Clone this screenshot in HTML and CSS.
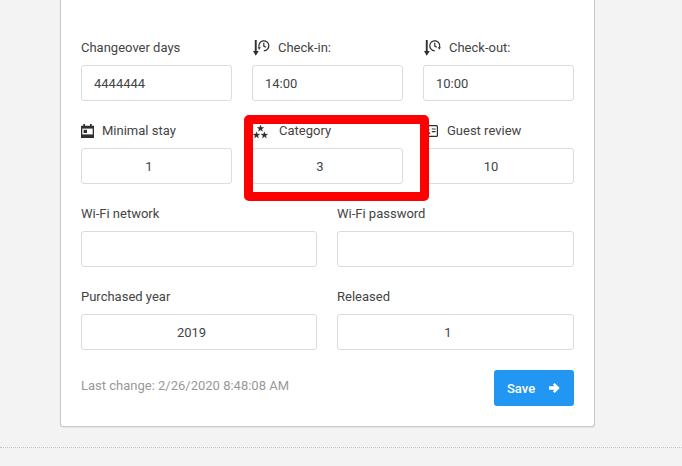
FILE: index.html
```html
<!DOCTYPE html>
<html lang="en">
<head>
<meta charset="utf-8">
<title>Property details</title>
<link rel="stylesheet" href="styles.css">
</head>
<body>
<main class="page">
  <form class="card">
    <div class="row">
      <label class="field">
        <span class="label">Changeover days</span>
        <input class="input" type="text" value="4444444">
      </label>
      <label class="field">
        <span class="label">
          <svg class="icon icon-time" viewBox="0 0 16 16" aria-hidden="true">
            <path class="solid" d="M1.800 0h1.900v11h2.100L2.750 15.800 0 11h1.800z"/>
            <path class="line" d="M10.800 10.800A5 5 0 1 0 6.100 7.400"/>
            <path class="solid" d="M4.600 7.300h3.200l-1.600 2.500z"/>
            <path class="line" d="M10.800 2.800v3.300l2 1.100"/>
          </svg>
          Check-in:
        </span>
        <input class="input" type="text" value="14:00">
      </label>
      <label class="field">
        <span class="label">
          <svg class="icon icon-time" viewBox="0 0 16 16" aria-hidden="true">
            <path class="solid" d="M1.800 0h1.900v11h2.100L2.750 15.800 0 11h1.800z"/>
            <path class="line" d="M10.800 10.800A5 5 0 1 1 15.500 7.400"/>
            <path class="solid" d="M13.700 7.300h3.200l-1.600 2.500z"/>
            <path class="line" d="M10.800 2.800v3.300l2 1.100"/>
          </svg>
          Check-out:
        </span>
        <input class="input" type="text" value="10:00">
      </label>
    </div>
    <div class="row">
      <label class="field">
        <span class="label">
          <svg class="icon icon-calendar" viewBox="0 0 13 14" aria-hidden="true">
            <path class="solid" d="M2.300 0h1.700v1.700h5V0h1.700v1.700H13V14H0V1.700h2.300z"/>
            <rect class="cut" x="1.300" y="4.600" width="10.400" height="5.800"/>
            <rect class="solid" x="2.600" y="5.800" width="3.400" height="3.200"/>
          </svg>
          Minimal stay
        </span>
        <input class="input center" type="text" value="1">
      </label>
      <label class="field">
        <span class="label">
          <svg class="icon icon-stars" viewBox="0 0 15 14" aria-hidden="true">
            <path class="solid star" d="M7.500 0l.82 2.370 2.510.05-2 1.510.73 2.400-2.060-1.430-2.060 1.430.73-2.400-2-1.510 2.510-.05z"/>
            <path class="solid star" d="M3.500 6.700l.82 2.370 2.510.05-2 1.510.73 2.400-2.060-1.430-2.060 1.430.73-2.400-2-1.510 2.510-.05z"/>
            <path class="solid star" d="M11.400 6.700l.82 2.370 2.510.05-2 1.510.73 2.400-2.060-1.430-2.060 1.430.73-2.400-2-1.510 2.510-.05z"/>
          </svg>
          Category
        </span>
        <input class="input center" type="text" value="3">
      </label>
      <label class="field">
        <span class="label">
          <svg class="icon icon-card" viewBox="0 0 15 12" aria-hidden="true">
            <rect class="line" x=".6" y=".6" width="13.800" height="10.800" rx="1"/>
            <circle class="solid" cx="4.800" cy="4.600" r="1.600"/>
            <path class="solid" d="M2.400 9c0-1.500 1-2.200 2.400-2.200S7.200 7.500 7.200 9z"/>
            <path class="solid" d="M8.800 3.400h3.800v1.200H8.800zM8.800 6h3.800v1.200H8.800z"/>
          </svg>
          Guest review
        </span>
        <input class="input center" type="text" value="10">
      </label>
    </div>
    <div class="row row-pair">
      <label class="field">
        <span class="label">Wi-Fi network</span>
        <input class="input" type="text" value="">
      </label>
      <label class="field">
        <span class="label">Wi-Fi password</span>
        <input class="input" type="text" value="">
      </label>
    </div>
    <div class="row row-pair">
      <label class="field">
        <span class="label">Purchased year</span>
        <input class="input center" type="text" value="2019">
      </label>
      <label class="field">
        <span class="label">Released</span>
        <input class="input center" type="text" value="1">
      </label>
    </div>
    <div class="footer-row">
      <span class="changed">Last change: 2/26/2020 8:48:08 AM</span>
      <button class="save" type="button">
        Save
        <svg class="save-icon" viewBox="0 0 11 10" aria-hidden="true">
          <path d="M5.700 0L10.700 5 5.700 10 3.900 8.200 5.300 6.800H0V3.200h5.300L3.900 1.800z"/>
        </svg>
      </button>
    </div>
  </form>
  <div class="divider"></div>
  <div class="highlight"></div>
</main>
</body>
</html>
```
FILE: styles.css
```css
* {
  box-sizing: border-box;
}

html,
body {
  margin: 0;
  height: 100%;
  background: #f3f3f3;
}

.page {
  position: relative;
  height: 466px;
  overflow: hidden;
  font-family: Roboto, "Liberation Sans", sans-serif;
  font-size: 13px;
  color: #444;
}

.card {
  display: flex;
  flex-direction: column;
  gap: 20px;
  width: 535px;
  height: 427px;
  margin-left: 60px;
  padding: 38px 20px 20px;
  background: #fff;
  border: 1px solid #c8c8c8;
  border-top: 0;
  border-radius: 0 0 3px 3px;
  box-shadow: 0 1px 1px rgba(0, 0, 0, .06);
}

.row {
  display: grid;
  grid-template-columns: repeat(3, 151px);
  gap: 20px;
}

.row-pair {
  grid-template-columns: 236px 237px;
}

.field {
  min-width: 0;
  display: flex;
  flex-direction: column;
  gap: 7px;
}

.label {
  display: flex;
  align-items: center;
  height: 20px;
  line-height: 20px;
  white-space: nowrap;
}

.input {
  display: block;
  width: 100%;
  height: 36px;
  padding: 0 12px;
  border: 1px solid #dcdcdc;
  border-radius: 3px;
  background: #fff;
  font: 13px Roboto, "Liberation Sans", sans-serif;
  color: #444;
  outline: none;
}

.center {
  padding-right: 27px;
  text-align: center;
}

.icon {
  flex: none;
  display: block;
  overflow: visible;
}

.solid {
  fill: #2f2f2f;
}

.line {
  fill: none;
  stroke: #2f2f2f;
  stroke-width: 1.2;
}

.star {
  stroke: #2f2f2f;
  stroke-width: .3;
}

.cut {
  fill: #fff;
}

.icon-time {
  width: 16px;
  height: 16px;
  margin: -1px 9px 0 1px;
}

.icon-calendar {
  width: 13px;
  height: 14px;
  margin-right: 8px;
}

.icon-stars {
  width: 15px;
  height: 14px;
  margin: 1px 11px 0 1px;
}

.icon-card {
  width: 15px;
  height: 12px;
  margin: 0 9px 0 0;
}

.footer-row {
  display: flex;
  justify-content: space-between;
  align-items: flex-start;
}

.changed {
  margin-top: 7px;
  line-height: 18px;
  color: #999;
}

.save {
  display: flex;
  align-items: center;
  gap: 14px;
  width: 80px;
  height: 36px;
  padding: 0 13px;
  border: 0;
  border-radius: 3px;
  background: #2196f3;
  color: #fff;
  font: 500 13px Roboto, "Liberation Sans", sans-serif;
}

.save-icon {
  width: 11px;
  height: 10px;
  fill: #fff;
}

.divider {
  margin-top: 20px;
  border-top: 1px dotted #c4c4c4;
}

.highlight {
  position: absolute;
  left: 244px;
  top: 115px;
  width: 185px;
  height: 86px;
  border: 9px solid #f00;
  border-radius: 5px;
  pointer-events: none;
}
```
